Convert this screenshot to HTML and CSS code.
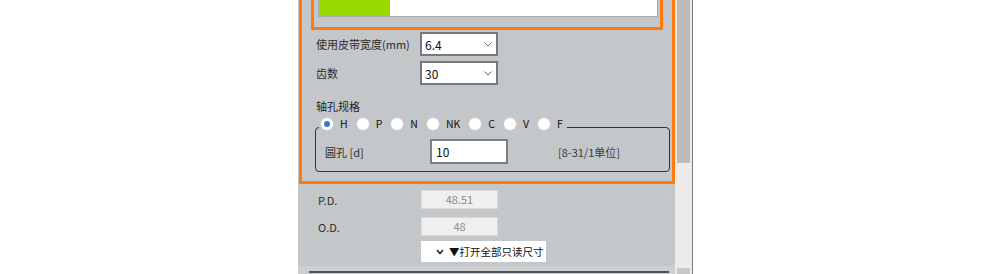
FILE: index.html
```html
<!DOCTYPE html>
<html lang="zh">
<head>
  <meta charset="UTF-8">
  <meta name="viewport" content="width=device-width, initial-scale=1.0">
  <title>皮带轮选型</title>
  <link rel="stylesheet" href="styles.css">
</head>
<body>
  <div class="window">
    <div class="panel">
      <!-- 选中的规格区域 -->
      <div class="group">
        <div class="chart-frame">
          <div class="chart">
            <div class="chart-bar" style="width: 71px"></div>
          </div>
        </div>

        <div class="field-row first">
          <span class="field-label">使用皮带宽度(mm)</span>
          <div class="select">
            <span>6.4</span>
            <svg class="chevron" width="8" height="5" viewBox="0 0 8 5"><path d="M0.5 0.5 L4 4 L7.5 0.5" fill="none" stroke="#666" stroke-width="1"/></svg>
          </div>
        </div>
        <div class="field-row">
          <span class="field-label">齿数</span>
          <div class="select">
            <span>30</span>
            <svg class="chevron" width="8" height="5" viewBox="0 0 8 5"><path d="M0.5 0.5 L4 4 L7.5 0.5" fill="none" stroke="#666" stroke-width="1"/></svg>
          </div>
        </div>

        <div class="section-title">轴孔规格</div>
        <fieldset class="bore">
          <legend class="bore-types">
            <span class="opt"><span class="radio checked"></span><span class="opt-label">H</span></span>
            <span class="opt"><span class="radio"></span><span class="opt-label">P</span></span>
            <span class="opt"><span class="radio"></span><span class="opt-label">N</span></span>
            <span class="opt"><span class="radio"></span><span class="opt-label">NK</span></span>
            <span class="opt"><span class="radio"></span><span class="opt-label">C</span></span>
            <span class="opt"><span class="radio"></span><span class="opt-label">V</span></span>
            <span class="opt"><span class="radio"></span><span class="opt-label">F</span></span>
          </legend>
          <div class="bore-row">
            <span class="bore-label">圆孔 [d]</span>
            <input class="bore-input" type="text" value="10">
            <span class="bore-hint">[8-31/1单位]</span>
          </div>
        </fieldset>
      </div>

      <!-- 只读尺寸 -->
      <div class="ro-rows">
        <div class="ro-row">
          <span class="ro-label">P.D.</span>
          <div class="ro-box">48.51</div>
        </div>
        <div class="ro-row">
          <span class="ro-label">O.D.</span>
          <div class="ro-box">48</div>
        </div>
        <button class="expand-btn">
          <svg width="8" height="6" viewBox="0 0 8 6"><path d="M1 1 L4 4.5 L7 1" fill="none" stroke="#222" stroke-width="1.6"/></svg>
          <span>▼打开全部只读尺寸</span>
        </button>
      </div>

      <div class="next-section"><div class="next-line"></div></div>
    </div>

    <div class="scrollbar">
      <div class="thumb"></div>
      <div class="track"></div>
      <div class="arrow"></div>
    </div>
  </div>
</body>
</html>
```

FILE: styles.css
```css
body {
  margin: 0;
  background: #fff;
  font-family: "Noto Sans CJK SC", "Noto Sans", sans-serif;
  font-size: 11px;
  color: #2c2c2c;
  overflow: hidden;
}
.window {
  display: flex;
  margin-left: 298px;
  width: 395px;
  height: 274px;
}
.panel {
  width: 377px;
  flex: none;
  background: #c4c7ca;
}
.group {
  margin-left: 1px;
  border: 3px solid #ff7a0c;
  border-top: 0;
  padding-bottom: 9px;
}
.chart-frame {
  margin: 0 9px;
  border: 3px solid #ff7a0c;
  border-top: 0;
  padding: 0 2px 10px 4px;
}
.chart {
  height: 16px;
  background: #fff;
  border: 1px solid #a9abad;
  border-top: 0;
}
.chart-bar {
  height: 16px;
  background: #9ad900;
}
.field-row {
  display: flex;
  align-items: center;
  height: 24px;
  margin: 5px 0 0 14px;
}
.field-row.first {
  margin-top: 2px;
}
.field-label {
  width: 104px;
}
.select {
  box-sizing: border-box;
  width: 78px;
  height: 24px;
  border: 2px solid #77797b;
  background: #fff;
  display: flex;
  align-items: center;
  justify-content: space-between;
  padding: 0 4px 0 3px;
  font-size: 12px;
  color: #111;
}
.section-title {
  margin: 13px 0 0 14px;
  line-height: 16px;
  color: #1e1e1e;
}
.bore {
  margin: 2px 2px 0 13px;
  padding: 0 0 7px 0;
  border: 1px solid #2f2f2f;
  border-radius: 4px;
}
.bore-types {
  display: flex;
  align-items: flex-start;
  margin-left: 3px;
  padding: 0 4px 8px 2px;
  line-height: 15px;
}
.opt {
  display: flex;
  align-items: center;
  height: 15px;
  margin-right: 9px;
}
.opt:last-child {
  margin-right: 0;
}
.radio {
  width: 12px;
  height: 12px;
  border-radius: 50%;
  background: #fff;
  box-shadow: 0 0 0 0.5px #d8d8d8;
  display: flex;
  align-items: center;
  justify-content: center;
}
.radio.checked::after {
  content: "";
  width: 6px;
  height: 6px;
  border-radius: 50%;
  background: #3a78c8;
}
.opt-label {
  margin-left: 7px;
  font-size: 10.5px;
  color: #111;
}
.bore-row {
  display: flex;
  align-items: center;
  height: 25px;
  padding-left: 9px;
}
.bore-label {
  width: 105px;
}
.bore-input {
  box-sizing: border-box;
  width: 78px;
  height: 25px;
  border: 2px solid #7c7e80;
  padding: 0 4px;
  font-family: inherit;
  font-size: 12px;
  color: #111;
  background: #fff;
}
.bore-hint {
  margin-left: 50px;
  color: #3a3a3a;
}
.ro-rows {
  padding-left: 20px;
  margin-top: 6px;
}
.ro-row {
  display: flex;
  align-items: center;
  height: 19px;
  margin-bottom: 8px;
}
.ro-label {
  width: 103px;
}
.ro-box {
  box-sizing: border-box;
  width: 77px;
  height: 19px;
  background: #efefef;
  border: 1px solid #dadada;
  color: #8a8a8a;
  text-align: center;
  line-height: 17px;
}
.expand-btn {
  display: flex;
  align-items: center;
  gap: 5px;
  width: 125px;
  height: 21px;
  margin: -3px 0 0 103px;
  padding: 0 0 0 15px;
  border: 0;
  background: #fff;
  font-family: inherit;
  font-size: 10.5px;
  color: #111;
  white-space: nowrap;
}
.next-section {
  margin-top: 4px;
  height: 8px;
  padding-top: 5px;
  box-sizing: border-box;
  background: #cdd0d2;
}
.next-line {
  margin-left: 11px;
  width: 360px;
  height: 2px;
  background: #4e5052;
}
.scrollbar {
  width: 17px;
  flex: none;
  display: flex;
  flex-direction: column;
  background: #ebebeb;
  border-right: 1px solid #7c7c7c;
}
.thumb {
  margin-left: 2px;
  width: 13px;
  height: 163px;
  background: #bcbcbc;
}
.track {
  flex: 1;
}
.arrow {
  margin-left: 2px;
  width: 13px;
  height: 6px;
  background: #c8c8c8;
}
```
